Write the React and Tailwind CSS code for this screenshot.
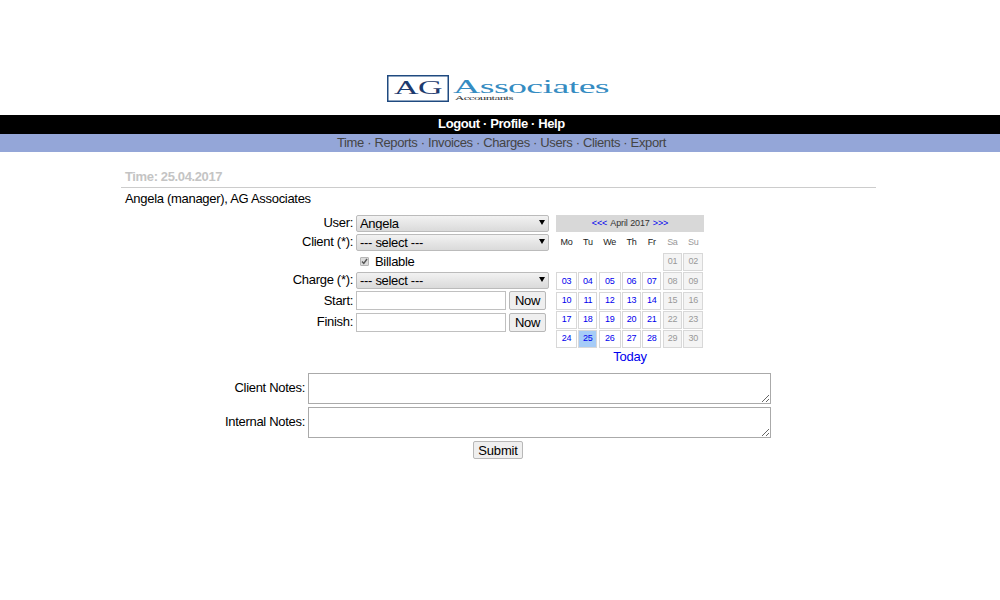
import React from 'react';

const weeks = [
  [null, null, null, null, null, '01', '02'],
  ['03', '04', '05', '06', '07', '08', '09'],
  ['10', '11', '12', '13', '14', '15', '16'],
  ['17', '18', '19', '20', '21', '22', '23'],
  ['24', '25', '26', '27', '28', '29', '30'],
];
const days = ['Mo', 'Tu', 'We', 'Th', 'Fr', 'Sa', 'Su'];
const gridCols = 'grid grid-cols-[21px_19px_22px_19px_19px_19.5px_19.5px] gap-x-[1.33px]';

const Logo = () => (
  <svg width="222" height="27" viewBox="0 0 222 27" className="block">
    <rect x="0.75" y="0.75" width="60.5" height="25.5" fill="#fff" stroke="#1f4a80" strokeWidth="1.5" />
    <text x="7" y="18.5" fontFamily="'Liberation Serif', serif" fontSize="18" fill="#1d3a6e" textLength="48" lengthAdjust="spacingAndGlyphs">AG</text>
    <text x="66" y="18" fontFamily="'Liberation Serif', serif" fontSize="19" fill="#358cc2" textLength="156" lengthAdjust="spacingAndGlyphs">Associates</text>
    <text x="68" y="25" fontFamily="'Liberation Serif', serif" fontSize="6.5" fill="#333" textLength="58" lengthAdjust="spacingAndGlyphs">Accountants</text>
  </svg>
);

const Select = ({ value }) => (
  <div className="relative w-[193px] h-[17px]">
    <select
      defaultValue={value}
      className="appearance-none block w-full h-full pl-[3px] border border-[#bbb] rounded-[2px] bg-linear-to-b from-[#f2f2f2] to-[#dadada] text-[13px] tracking-[-0.3px] leading-[13px] text-black outline-none"
    >
      <option>{value}</option>
    </select>
    <span className="absolute right-[4px] top-[5px] w-0 h-0 border-x-[3px] border-x-transparent border-t-[5px] border-t-black" />
  </div>
);

const Row = ({ label, lift, children, className }) => (
  <div className={`flex items-center ${className}`}>
    <label className={`w-[235px] pr-[3px] text-right ${lift ? 'pb-[2px]' : ''}`}>{label}</label>
    {children}
  </div>
);

const TimeInput = () => (
  <>
    <input type="text" className="w-[150px] h-[19px] border border-[#c0c0c0] bg-white outline-none" />
    <button className="ml-[3px] w-[37px] h-[19px] border border-[#b8b8b8] rounded-[2px] bg-[#efefef] text-[13px] leading-none text-black">Now</button>
  </>
);

const Calendar = () => (
  <div className="w-[148px] ml-[7px] text-[9px]">
    <div className="h-[17px] bg-[#d8d8d8] flex items-center justify-center gap-[3px] text-[#333] tracking-[-0.1px]">
      <a className="text-[#0000ee]">&lt;&lt;&lt;</a>
      <span>April 2017</span>
      <a className="text-[#0000ee]">&gt;&gt;&gt;</a>
    </div>
    <div className={`${gridCols} h-[21px] pt-px items-center text-center`}>
      {days.map((d, i) => (
        <span key={d} className={i > 4 ? 'text-[#999]' : 'text-[#222]'}>{d}</span>
      ))}
    </div>
    <div className="flex flex-col gap-[1.25px]">
      {weeks.map((week, w) => (
        <div key={w} className={gridCols}>
          {week.map((d, i) => {
            if (!d) return <span key={i} className="h-[18px]" />;
            const weekend = i > 4;
            const today = d === '25';
            return (
              <span
                key={d}
                className={`h-[18px] flex items-center justify-center border border-[#d8d8d8] ${
                  weekend ? 'bg-[#f4f4f4] text-[#999]' : today ? 'bg-[#a6ccf7] text-[#0000ee]' : 'bg-white text-[#0000ee]'
                }`}
              >
                {d}
              </span>
            );
          })}
        </div>
      ))}
    </div>
    <div className="mt-px text-center text-[13px] tracking-[-0.2px] leading-[16px] text-[#0000ee]">Today</div>
  </div>
);

const Notes = ({ label }) => (
  <div className="flex items-center">
    <label className="w-[187px] pr-[3px] pb-[2px] text-right">{label}</label>
    <textarea className="w-[463px] h-[31px] border border-[#aaa] bg-white outline-none" />
  </div>
);

export default function App() {
  return (
    <div className="min-h-[600px] bg-white text-[13px] tracking-[-0.3px] text-black font-['Liberation_Sans',Arial,sans-serif]">
      <div className="flex justify-center pt-[75px] pb-[13px] pr-[5px]">
        <Logo />
      </div>
      <div className="h-[19px] bg-black text-white font-bold text-[13px] tracking-[-0.39px] leading-[18px] text-center pl-[3px]">
        Logout · Profile · Help
      </div>
      <div className="h-[18px] bg-[#94a6d8] text-[#444] tracking-[-0.36px] leading-[17px] text-center pl-[3px]">
        Time · Reports · Invoices · Charges · Users · Clients · Export
      </div>

      <div className="w-[755px] ml-[121px] pt-[17px]">
        <div className="h-[19px] pl-[4px] font-bold text-[#c4c4c4] tracking-[-0.37px] leading-[16px] border-b border-[#ccc]">
          Time: 25.04.2017
        </div>
        <div className="pl-[4px] mt-[3px] leading-[16px]">Angela (manager), AG Associates</div>

        <div className="flex mt-[8px]">
          <div className="flex flex-col">
            <Row label="User:" lift className="h-[17px]"><Select value="Angela" /></Row>
            <Row label="Client (*):" lift className="h-[17px] mt-[2px]"><Select value="--- select ---" /></Row>
            <Row label="" className="h-[17px] mt-[2px]">
              <span className="relative ml-[4px] w-[9px] h-[9px]">
                <input type="checkbox" defaultChecked disabled className="appearance-none block w-[9px] h-[9px] border border-[#b5b5b5] rounded-[1px] bg-[#dcdcdc]" />
                <svg viewBox="0 0 9 9" className="absolute inset-0 w-[9px] h-[9px]">
                  <path d="M2 4.5 L3.8 6.5 L7 2" fill="none" stroke="#555" strokeWidth="1.4" />
                </svg>
              </span>
              <span className="ml-[6px]">Billable</span>
            </Row>
            <Row label="Charge (*):" lift className="h-[17px] mt-[2px]"><Select value="--- select ---" /></Row>
            <Row label="Start:" className="h-[19px] mt-[2px]"><TimeInput /></Row>
            <Row label="Finish:" lift className="h-[19px] mt-[3px]"><TimeInput /></Row>
          </div>
          <Calendar />
        </div>

        <div className="flex flex-col gap-[3px] mt-[8px]">
          <Notes label="Client Notes:" />
          <Notes label="Internal Notes:" />
        </div>
        <div className="flex justify-center mt-[3px] pr-[1px]">
          <button className="w-[50px] h-[18px] border border-[#b8b8b8] rounded-[2px] bg-[#efefef] text-[13px] tracking-[-0.2px] leading-none text-black">Submit</button>
        </div>
      </div>
    </div>
  );
}
